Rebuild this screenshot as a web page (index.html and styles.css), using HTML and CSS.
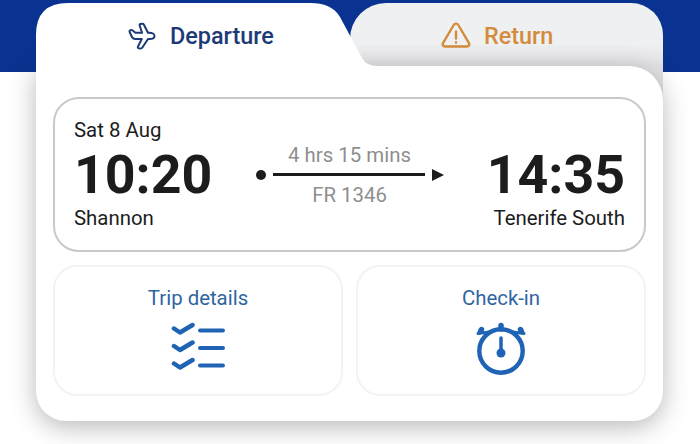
FILE: index.html
```html
<!DOCTYPE html>
<html lang="en">
<head>
    <meta charset="UTF-8">
    <meta name="viewport" content="width=device-width, initial-scale=1.0">
    <title>Flight</title>
    <link rel="stylesheet" href="styles.css">
</head>
<body>
    <div class="page">
        <!-- Tabs -->
        <div class="tabs">
            <div class="tab tab-departure">
                <svg class="tab-icon" width="28" height="28" viewBox="-1 -1 28 28" fill="none" stroke="#1d3a78" stroke-width="2" stroke-linejoin="round">
                    <path d="M25.5 13C25.5 11 23 9.8 20.5 9.8H19L14.8 1.5Q14.3.7 13.3.8L11.5 1Q10.3 1.2 10.7 2.5L13 9.8H6.5L3.3 7.3Q2.5 6.7 1.5 7.2Q.2 7.8.7 9L2.6 13.3Q3.8 16 6.5 16H12.8L9 23.5Q8.4 25 9.7 25.3L11.8 25.5Q12.8 25.5 13.4 24.5L19 16H20.5C23 16 25.5 15.2 25.5 13Z"/>
                </svg>
                <span>Departure</span>
            </div>
            <div class="tab tab-return">
                <svg class="tab-icon" width="30" height="26" viewBox="0 0 30 26" fill="none" stroke="#d48c3c" stroke-width="2.4" stroke-linecap="round" stroke-linejoin="round">
                    <path d="M12.7 3 2 21.2c-.9 1.6.2 3.3 2 3.3h22c1.8 0 2.9-1.7 2-3.3L17.3 3c-1-1.8-3.6-1.8-4.6 0z"/>
                    <path d="M15 9.5v7"/>
                    <path d="M15 20.3v.2"/>
                </svg>
                <span>Return</span>
            </div>
        </div>

        <!-- Card -->
        <div class="card">
            <div class="route">
                <div class="stop">
                    <div class="small">Sat 8 Aug</div>
                    <div class="time">10:20</div>
                    <div class="small">Shannon</div>
                </div>
                <div class="flight">
                    <div class="muted">4 hrs 15 mins</div>
                    <div class="line">
                        <span class="dot"></span>
                        <span class="bar"></span>
                        <span class="arrow"></span>
                    </div>
                    <div class="muted">FR 1346</div>
                </div>
                <div class="stop stop-end">
                    <div class="small">&nbsp;</div>
                    <div class="time">14:35</div>
                    <div class="small">Tenerife South</div>
                </div>
            </div>

            <div class="actions">
                <div class="action">
                    <div class="action-label">Trip details</div>
                    <svg width="54" height="48" viewBox="0 0 54 48" fill="none" stroke="#1f63b5" stroke-linecap="round" stroke-linejoin="round">
                        <g stroke-width="4.5">
                            <path d="M3 6.5 9 10.5 21.5 3"/>
                            <path d="M3 24 9 28 21.5 20.5"/>
                            <path d="M3 41.5 9 45.5 21.5 38"/>
                        </g>
                        <g stroke-width="4">
                            <path d="M29 8.5H52"/>
                            <path d="M29 26H52"/>
                            <path d="M29 43.5H52"/>
                        </g>
                    </svg>
                </div>
                <div class="action">
                    <div class="action-label">Check-in</div>
                    <svg width="54" height="54" viewBox="0 0 54 54" fill="none" stroke="#1f63b5" stroke-linecap="round">
                        <circle cx="27" cy="29" r="21.7" stroke-width="4.4"/>
                        <path d="M27 3.5V7" stroke-width="5.5"/>
                        <path d="M7.5 7.500 6.500 9.500" stroke-width="5.5"/>
                        <path d="M46.500 7.500 47.500 9.500" stroke-width="5.5"/>
                        <path d="M4 11.500 15 10" stroke-width="3"/>
                        <path d="M50 11.500 39 10" stroke-width="3"/>
                        <path d="M27 16V31" stroke-width="3.5"/>
                        <circle cx="27" cy="31" r="4.5" fill="#1f63b5" stroke="none"/>
                    </svg>
                </div>
            </div>
        </div>
    </div>
</body>
</html>
```

FILE: styles.css
```css
* {
    box-sizing: border-box;
}
body {
    margin: 0;
    font-family: Roboto, Arial, sans-serif;
    background-color: #fff;
}
.page {
    width: 700px;
    height: 444px;
    padding: 3px 37px 0 36px;
    overflow: hidden;
    background: linear-gradient(#0a3391 72px, #fff 72px);
}
.tabs {
    display: flex;
    align-items: flex-start;
}
.tab {
    display: flex;
    align-items: flex-start;
    font-size: 23.4px;
    font-weight: 500;
    line-height: 28px;
}
.tab-departure {
    position: relative;
    z-index: 2;
    flex: none;
    width: 342px;
    height: 63px;
    padding: 19px 0 0 92px;
    gap: 14px;
    background-color: #fff;
    color: #1d3a78;
    clip-path: path("M0 63V32Q0 0 32 0H274C288 0 298 4 304 14L326 55Q330 63 342 63Z");
}
.tab-return {
    flex: 1;
    height: 100px;
    margin-left: -28px;
    padding: 19px 0 0 91px;
    gap: 13px;
    background: linear-gradient(#eff0f2 40px, #e2e2e4 62px);
    color: #d48c3c;
    border-radius: 36px 32px 0 0;
}
.tab-icon {
    flex: none;
}
.card {
    position: relative;
    z-index: 1;
    height: 355px;
    margin-top: -37px;
    padding: 31px 17px 25px;
    background-color: #fff;
    border-radius: 0 34px 30px 30px;
    box-shadow: 0 6px 26px rgba(0, 0, 0, 0.28);
}
.route {
    display: flex;
    align-items: center;
    justify-content: space-between;
    height: 155px;
    padding: 0 19px;
    border: 2px solid #c9c9c9;
    border-radius: 26px;
}
.stop {
    display: flex;
    flex-direction: column;
    margin-bottom: 2px;
}
.stop-end {
    align-items: flex-end;
}
.small {
    font-size: 20.4px;
    line-height: 24px;
    color: #1c1c1c;
}
.time {
    font-size: 53.7px;
    font-weight: 700;
    line-height: 54px;
    margin: 6px 0 4px;
    color: #1c1c1c;
}
.flight {
    display: flex;
    flex-direction: column;
    align-items: center;
    gap: 3px;
}
.muted {
    font-size: 20.4px;
    line-height: 22px;
    color: #8e8e8e;
}
.line {
    display: flex;
    align-items: center;
    width: 188px;
}
.dot {
    width: 10px;
    height: 10px;
    border-radius: 50%;
    background-color: #1c1c1c;
}
.bar {
    flex: 1;
    height: 3px;
    margin: 0 7px;
    background-color: #1c1c1c;
}
.arrow {
    border-left: 12px solid #1c1c1c;
    border-top: 6px solid transparent;
    border-bottom: 6px solid transparent;
}
.actions {
    display: flex;
    gap: 13px;
    margin-top: 13px;
}
.action {
    flex: 1;
    display: flex;
    flex-direction: column;
    align-items: center;
    gap: 13px;
    height: 131px;
    padding-top: 20px;
    border: 2px solid #f3f3f3;
    border-radius: 24px;
}
.action-label {
    font-size: 20.4px;
    line-height: 22px;
    color: #2f659f;
}
```
